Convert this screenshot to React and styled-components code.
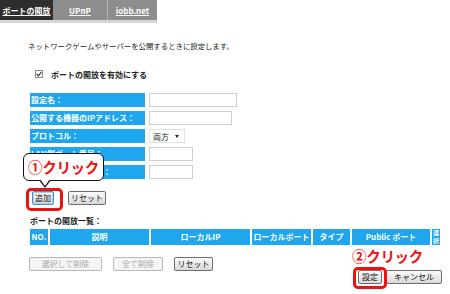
import styled, { createGlobalStyle } from "styled-components";

const GlobalStyle = createGlobalStyle`
  html, body { margin: 0; padding: 0; background: #fff; }
  body {
    font-family: "Noto Sans CJK JP", "Liberation Sans", sans-serif;
    font-size: 8px;
    color: #222;
  }
`;

const BLUE = "#1ea6ef";

const Page = styled.div`
  position: relative;
  width: 450px;
  height: 294px;
  overflow: hidden;
`;

const TabBar = styled.div`
  display: flex;
  width: 157px;
  height: 20px;
  background: #8d8d8d;
  border-bottom: 3px solid #d6d6d6;
`;

const Tab = styled.a`
  display: flex;
  align-items: center;
  justify-content: center;
  width: ${(p) => p.$w}px;
  color: #fff;
  font-weight: bold;
  font-size: 8px;
  text-decoration: underline;
  background: ${(p) => (p.$active ? "#2e2e2e" : "transparent")};
  border-right: ${(p) => (p.$divider ? "1px solid #b5b5b5" : "none")};
  box-sizing: border-box;
`;

const Content = styled.div`
  padding-left: 30px;
  width: 412px;
`;

const Intro = styled.p`
  margin: 17px 0 0 -2px;
  line-height: 12px;
  font-size: 7.4px;
`;

const CheckRow = styled.label`
  display: flex;
  align-items: center;
  gap: 8px;
  margin: 16px 0 0 5px;
  height: 12px;
  font-weight: bold;
`;

const CheckBox = styled.span`
  display: inline-flex;
  align-items: center;
  justify-content: center;
  width: 8px;
  height: 8px;
  border: 1px solid #8a8a8a;
  background: #fff;
  box-sizing: border-box;
`;

const Form = styled.div`
  display: grid;
  grid-template-columns: 115px auto;
  column-gap: 4px;
  row-gap: 4px;
  margin-top: 13px;
  justify-items: start;
`;

const Label = styled.div`
  width: 115px;
  height: 14px;
  background: ${BLUE};
  color: #fff;
  font-weight: bold;
  line-height: 14px;
  padding-left: 1px;
  box-sizing: border-box;
`;

const Input = styled.div`
  width: ${(p) => p.$w}px;
  height: 14px;
  border: 1px solid #cfcfcf;
  background: #fff;
  box-sizing: border-box;
`;

const Select = styled.div`
  display: flex;
  align-items: center;
  gap: 6px;
  width: 36px;
  height: 14px;
  padding-left: 3px;
  border: 1px solid #e2e2e2;
  box-sizing: border-box;
  font-size: 8px;
  &::after {
    content: "";
    border-left: 2.5px solid transparent;
    border-right: 2.5px solid transparent;
    border-top: 3px solid #222;
  }
`;

const ButtonRow = styled.div`
  position: relative;
  display: flex;
  align-items: center;
  gap: ${(p) => p.$gap || 14}px;
  margin-top: ${(p) => p.$top || 0}px;
  margin-left: ${(p) => p.$left || 0}px;
`;

const Button = styled.button`
  width: ${(p) => p.$w}px;
  height: 14px;
  padding: 0;
  font-family: inherit;
  font-size: 8px;
  line-height: 12px;
  color: ${(p) => (p.$disabled ? "#a8a8a8" : "#111")};
  background: ${(p) =>
    p.$disabled ? "#f5f5f5" : "linear-gradient(#fbfbfb, #d9d9d9)"};
  border: 1px solid
    ${(p) => (p.$focused ? "#4d8fc6" : p.$disabled ? "#b8b8b8" : "#6e6e6e")};
  border-radius: 2px;
  box-shadow: ${(p) => (p.$focused ? "inset 0 0 0 1px #a9d2f2" : "none")};
`;

const Highlight = styled.span`
  position: relative;
  display: inline-flex;
  &::after {
    content: "";
    position: absolute;
    left: ${(p) => p.$l}px;
    right: ${(p) => p.$r}px;
    top: -3px;
    bottom: ${(p) => p.$b}px;
    border: 3px solid #ee1111;
    border-radius: 5px;
  }
`;

const Callout = styled.div`
  position: absolute;
  left: -9px;
  top: -38px;
  width: 81px;
  height: 28px;
  border: 1px solid #111;
  border-radius: 6px;
  background: #fff;
  box-sizing: border-box;
  display: flex;
  align-items: center;
  justify-content: center;
  z-index: 2;
  &::before,
  &::after {
    content: "";
    position: absolute;
    left: 15px;
    border-left: 6px solid transparent;
    border-right: 6px solid transparent;
  }
  &::before {
    bottom: -8px;
    border-top: 8px solid #111;
  }
  &::after {
    bottom: -6px;
    left: 16px;
    border-left-width: 5px;
    border-right-width: 5px;
    border-top: 7px solid #fff;
  }
`;

const ClickText = styled.span`
  color: #ee1111;
  font-weight: bold;
  font-size: 14.5px;
  letter-spacing: -0.3px;
  line-height: 16px;
`;

const SectionTitle = styled.div`
  margin-top: 11px;
  font-weight: bold;
  line-height: 10px;
`;

const Table = styled.div`
  display: grid;
  grid-template-columns: 18px 99px 99px 59px 37px 78px 8px;
  column-gap: 2px;
  margin-top: 3px;
  width: 410px;
`;

const Th = styled.div`
  display: flex;
  flex-direction: column;
  align-items: center;
  justify-content: center;
  height: 16px;
  background: ${BLUE};
  color: #fff;
  font-weight: bold;
  font-size: ${(p) => (p.$tiny ? 6 : 8)}px;
  line-height: ${(p) => (p.$tiny ? 8 : 16)}px;
  text-align: center;
  overflow: hidden;
`;

const Footer = styled.div`
  display: flex;
  justify-content: space-between;
  align-items: flex-start;
`;

const RightBox = styled.div`
  display: flex;
  flex-direction: column;
  align-items: flex-start;
  margin-top: 3px;
  width: 90px;
`;

const Check = () => (
  <svg width="6" height="6" viewBox="0 0 6 6">
    <path d="M0.7 3 L2.4 4.8 L5.4 1" fill="none" stroke="#333" strokeWidth="1.2" />
  </svg>
);

export default function App() {
  return (
    <Page>
      <GlobalStyle />
      <TabBar>
        <Tab $w={53} $active>ポートの開放</Tab>
        <Tab $w={55} $divider>UPnP</Tab>
        <Tab $w={49}>iobb.net</Tab>
      </TabBar>
      <Content>
        <Intro>ネットワークゲームやサーバーを公開するときに設定します。</Intro>
        <CheckRow>
          <CheckBox><Check /></CheckBox>
          ポートの開放を有効にする
        </CheckRow>
        <Form>
          <Label>設定名：</Label>
          <Input $w={88} />
          <Label>公開する機器のIPアドレス：</Label>
          <Input $w={83} />
          <Label>プロトコル：</Label>
          <Select>両方</Select>
          <Label>LAN側ポート番号：</Label>
          <Input $w={44} />
          <Label>公開するポート番号：</Label>
          <Input $w={44} />
        </Form>
        <ButtonRow $top={12} $left={2}>
          <Callout><ClickText>①クリック</ClickText></Callout>
          <Highlight $l={-6} $r={-9} $b={-6}>
            <Button $w={22} $focused>追加</Button>
          </Highlight>
          <Button $w={38}>リセット</Button>
        </ButtonRow>
        <SectionTitle>ポートの開放一覧：</SectionTitle>
        <Table>
          <Th>NO.</Th>
          <Th>説明</Th>
          <Th>ローカルIP</Th>
          <Th>ローカルポート</Th>
          <Th>タイプ</Th>
          <Th>Public ポート</Th>
          <Th $tiny><span>選</span><span>択</span></Th>
        </Table>
        <Footer>
          <ButtonRow $top={12} $gap={11} $left={-1}>
            <Button $w={73} $disabled>選択して削除</Button>
            <Button $w={50} $disabled>全て削除</Button>
            <Button $w={39}>リセット</Button>
          </ButtonRow>
          <RightBox>
            <ClickText>②クリック</ClickText>
            <ButtonRow $top={6} $gap={4} $left={6}>
              <Highlight $l={-5} $r={-5} $b={-5}>
                <Button $w={24}>設定</Button>
              </Highlight>
              <Button $w={56}>キャンセル</Button>
            </ButtonRow>
          </RightBox>
        </Footer>
      </Content>
    </Page>
  );
}
